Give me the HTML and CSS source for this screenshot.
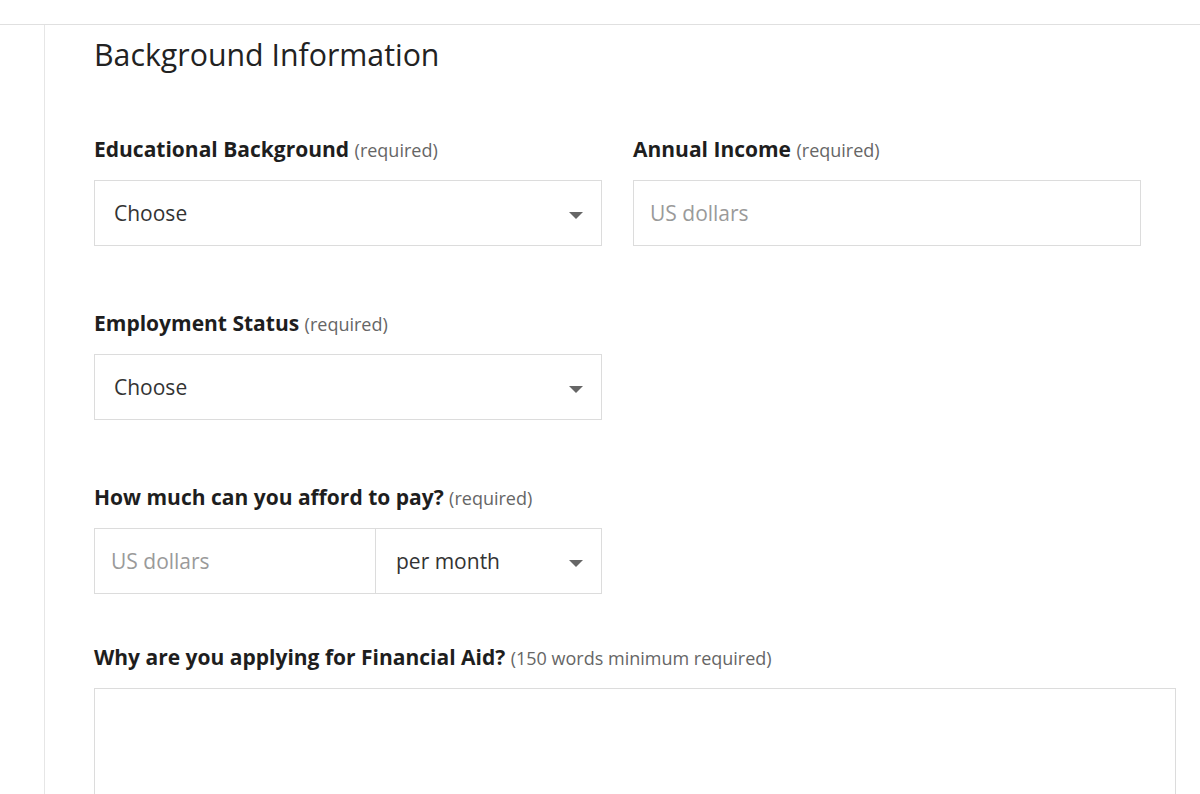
FILE: index.html
```html
<!DOCTYPE html>
<html lang="en">

<head>
    <meta charset="UTF-8">
    <meta name="viewport" content="width=device-width, initial-scale=1.0">
    <title>Financial Aid Application</title>
    <link rel="stylesheet" href="styles.css">
</head>

<body>
    <div class="page">
        <div class="panel">
            <h2 class="section-title">Background Information</h2>

            <div class="row first">
                <div class="field">
                    <label class="label">Educational Background <span class="hint">(required)</span></label>
                    <div class="select-wrap">
                        <select class="control">
                            <option>Choose</option>
                        </select>
                        <span class="caret"></span>
                    </div>
                </div>
                <div class="field">
                    <label class="label">Annual Income <span class="hint">(required)</span></label>
                    <input class="control text-input" type="text" placeholder="US dollars">
                </div>
            </div>

            <div class="row">
                <div class="field">
                    <label class="label">Employment Status <span class="hint">(required)</span></label>
                    <div class="select-wrap">
                        <select class="control">
                            <option>Choose</option>
                        </select>
                        <span class="caret"></span>
                    </div>
                </div>
            </div>

            <div class="row">
                <div class="field">
                    <label class="label">How much can you afford to pay? <span class="hint">(required)</span></label>
                    <div class="split">
                        <input class="control amount" type="text" placeholder="US dollars">
                        <div class="select-wrap period">
                            <select class="control">
                                <option>per month</option>
                            </select>
                            <span class="caret"></span>
                        </div>
                    </div>
                </div>
            </div>

            <div class="row last">
                <div class="field wide">
                    <label class="label">Why are you applying for Financial Aid? <span class="hint">(150 words minimum required)</span></label>
                    <textarea class="control essay"></textarea>
                </div>
            </div>
        </div>
    </div>
</body>

</html>
```

FILE: styles.css
```css
body {
    font-family: "Open Sans", Arial, sans-serif;
    margin: 0;
    padding: 0;
    background: #fff;
    color: #222;
}

.page {
    padding-top: 24px;
}

/* top rule + the thin vertical rule at the left */
.panel {
    border-top: 1px solid #e0e0e0;
    background: linear-gradient(#e6e6e6, #e6e6e6) no-repeat 44px 0 / 1px 100%;
    padding-left: 94px;
    min-height: 800px;
    display: flex;
    flex-direction: column;
}

.section-title {
    margin: 10px 0 0 0;
    font-size: 30.3px;
    font-weight: 400;
    line-height: 40px;
    color: #222;
}

.row {
    display: flex;
    gap: 31px;
    margin-top: 61px;
}

.row.first {
    margin-top: 58px;
}

.row.last {
    margin-top: 47px;
}

.field {
    width: 508px;
    display: flex;
    flex-direction: column;
}

.field.wide {
    width: 1082px;
}

.label {
    font-size: 21px;
    font-weight: 700;
    line-height: 32px;
    color: #1e1e1e;
    margin-bottom: 14px;
}

.hint {
    font-size: 18px;
    font-weight: 400;
    color: #666;
}

.control {
    box-sizing: border-box;
    height: 66px;
    border: 1px solid #dcdcdc;
    border-radius: 0;
    background: #fff;
    font-family: "Open Sans", Arial, sans-serif;
    font-size: 21px;
    color: #333;
    outline: none;
    margin: 0;
}

select.control {
    width: 100%;
    appearance: none;
    -webkit-appearance: none;
    padding: 0 50px 0 19px;
}

.text-input {
    width: 100%;
    padding: 0 16px;
}

.control::placeholder {
    color: #9a9a9a;
}

.select-wrap {
    position: relative;
}

.caret {
    position: absolute;
    right: 19px;
    top: 32px;
    width: 0;
    height: 0;
    border-left: 7px solid transparent;
    border-right: 7px solid transparent;
    border-top: 7px solid #666;
    pointer-events: none;
}

.split {
    display: flex;
}

.amount {
    width: 282px;
    padding: 0 16px;
}

.period {
    flex: 1;
}

.period select.control {
    border-left: none;
    padding-left: 20px;
}

.essay {
    width: 100%;
    height: 160px;
    resize: none;
    padding: 14px 16px;
}
```
